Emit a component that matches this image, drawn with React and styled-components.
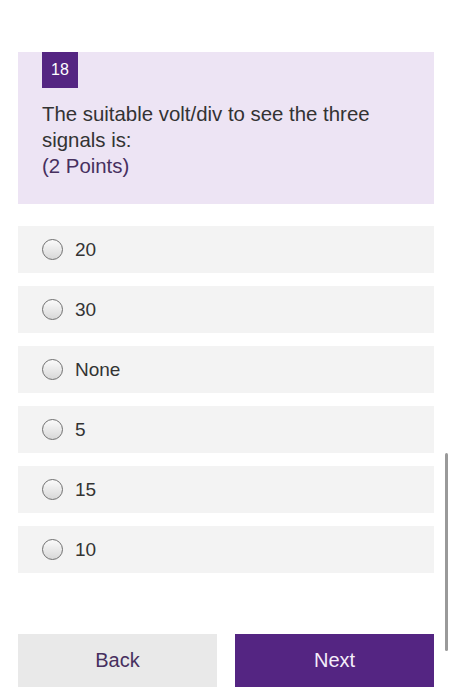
import React from "react";
import styled, { createGlobalStyle } from "styled-components";

const GlobalStyle = createGlobalStyle`
  body {
    margin: 0;
    background: #ffffff;
    font-family: "Liberation Sans", Arial, sans-serif;
  }
`;

const Page = styled.div`
  position: relative;
  width: 451px;
  height: 700px;
  box-sizing: border-box;
  padding: 52px 17px 0 18px;
  overflow: hidden;
`;

const QuestionCard = styled.div`
  background: #ede4f4;
  padding: 0 24px 25px 24px;
`;

const Badge = styled.div`
  width: 36px;
  height: 36px;
  background: #542582;
  color: #ffffff;
  font-size: 16px;
  display: flex;
  align-items: center;
  justify-content: center;
`;

const Title = styled.p`
  margin: 13px 0 0;
  font-size: 20.4px;
  line-height: 26px;
  color: #333333;
`;

const Points = styled.span`
  display: block;
  color: #47305f;
`;

const Options = styled.div`
  display: flex;
  flex-direction: column;
  gap: 13px;
  margin-top: 22px;
`;

const Option = styled.label`
  height: 47px;
  background: #f3f3f3;
  display: flex;
  align-items: center;
  padding-left: 24px;
  gap: 12px;
  font-size: 19px;
  color: #333333;
`;

const Radio = styled.span`
  width: 21px;
  height: 21px;
  border-radius: 50%;
  border: 1px solid #6f6f6f;
  background: linear-gradient(#fbfbfb, #d8d8d8);
  box-sizing: border-box;
`;

const Footer = styled.div`
  display: flex;
  gap: 18px;
  margin-top: 61px;
`;

const Button = styled.button`
  flex: 1;
  height: 53px;
  border: none;
  font-family: inherit;
  font-size: 20px;
  background: ${(p) => (p.$primary ? "#542582" : "#e9e9e9")};
  color: ${(p) => (p.$primary ? "#f4eefa" : "#47305f")};
`;

const Scrollbar = styled.div`
  position: absolute;
  left: 445px;
  top: 453px;
  width: 3px;
  height: 198px;
  border-radius: 2px;
  background: #9a9a9a;
`;

const answers = ["20", "30", "None", "5", "15", "10"];

const App = () => {
  return (
    <Page>
      <GlobalStyle />
      <QuestionCard>
        <Badge>18</Badge>
        <Title>
          The suitable volt/div to see the three signals is:
          <Points>(2 Points)</Points>
        </Title>
      </QuestionCard>
      <Options>
        {answers.map((a) => (
          <Option key={a}>
            <Radio />
            {a}
          </Option>
        ))}
      </Options>
      <Footer>
        <Button>Back</Button>
        <Button $primary>Next</Button>
      </Footer>
      <Scrollbar />
    </Page>
  );
};

export default App;
